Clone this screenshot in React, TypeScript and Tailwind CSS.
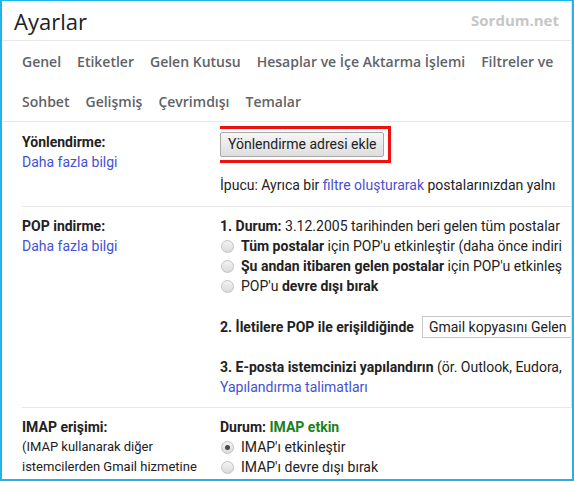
import React from "react";

const Radio = ({ checked = false }: { checked?: boolean }) => (
  <span className="ml-[1px] mr-[7px] inline-flex h-[13px] w-[13px] shrink-0 items-center justify-center rounded-full border border-[#c2c2c2] bg-linear-to-b from-[#f4f4f4] to-[#dadada]">
    {checked && <span className="h-[5px] w-[5px] rounded-full bg-[#4a4a4a]" />}
  </span>
);

const tabsTop = ["Genel", "Etiketler", "Gelen Kutusu", "Hesaplar ve İçe Aktarma İşlemi", "Filtreler ve"];
const tabsBottom = ["Sohbet", "Gelişmiş", "Çevrimdışı", "Temalar"];

const App = () => {
  return (
    <div className="h-[481px] w-[574px] overflow-hidden border-2 border-t border-[#1fb5ea] bg-white font-['Roboto',sans-serif] text-[14px] text-[#222]">
      <div className="border-r border-[#e3e3e3]">
        {/* header */}
        <div className="flex h-[40px] items-center justify-between border-b border-[#e8e8e8] pl-[12px] pr-[12px]">
          <span className="font-['Open_Sans',sans-serif] text-[22px] leading-none text-[#202124]">Ayarlar</span>
          <span className="font-['Open_Sans',sans-serif] text-[15px] font-bold text-[#c6c6c6]">Sordum.net</span>
        </div>

        {/* tabs */}
        <div className="border-b border-[#e8e8e8] pl-[20px] font-['Open_Sans',sans-serif] text-[14px] font-semibold text-[#5f6368]">
          <div className="flex h-[40px] items-center gap-4 whitespace-nowrap">
            {tabsTop.map((t) => (
              <span key={t}>{t}</span>
            ))}
          </div>
          <div className="flex h-[40px] items-center gap-4 whitespace-nowrap">
            {tabsBottom.map((t) => (
              <span key={t}>{t}</span>
            ))}
          </div>
        </div>

        {/* Yönlendirme */}
        <div className="ml-[20px] flex border-b border-[#e8e8e8] pb-[11px] leading-[20px]">
          <div className="w-[198px] shrink-0 pt-[10px]">
            <div className="font-bold">Yönlendirme:</div>
            <div className="text-[#4452d3]">Daha fazla bilgi</div>
          </div>
          <div className="min-w-0 flex-1 overflow-hidden whitespace-nowrap pt-[4px]">
            <div className="-ml-[9px] inline-block border-[3px] border-[#ee1111] py-[3px] pl-[6px] pr-[4px]">
              <button className="h-[25px] rounded-[2px] border border-[#a9a9a9] bg-linear-to-b from-[#f6f6f6] to-[#dedede] px-[7px] font-['Roboto',sans-serif] text-[14px] leading-[23px] text-[#222]">
                Yönlendirme adresi ekle
              </button>
            </div>
            <div className="mt-[12px]">
              İpucu: Ayrıca bir <span className="text-[#4a4fd0]">filtre oluşturarak</span> postalarınızdan yalnı
            </div>
          </div>
        </div>

        {/* POP */}
        <div className="ml-[20px] flex border-b border-[#e8e8e8] pb-[10px] leading-[20px]">
          <div className="w-[198px] shrink-0 pt-[9px]">
            <div className="font-bold">POP indirme:</div>
            <div className="text-[#4452d3]">Daha fazla bilgi</div>
          </div>
          <div className="min-w-0 flex-1 overflow-hidden whitespace-nowrap pt-[9px]">
            <div>
              <b>1. Durum:</b> 3.12.2005 tarihinden beri gelen tüm postalar
            </div>
            <div className="flex items-center">
              <Radio />
              <span>
                <b>Tüm postalar</b> için POP'u etkinleştir (daha önce indiri
              </span>
            </div>
            <div className="flex items-center">
              <Radio />
              <span>
                <b>Şu andan itibaren gelen postalar</b> için POP'u etkinleş
              </span>
            </div>
            <div className="flex items-center">
              <Radio />
              <span>
                POP'u <b>devre dışı bırak</b>
              </span>
            </div>
            <div className="mt-[20px] flex h-[22px] items-center">
              <b>2. İletilere POP ile erişildiğinde</b>
              <span className="ml-[8px] flex h-[22px] grow items-center border border-r-0 border-[#c8c8c8] pl-[6px]">
                Gmail kopyasını Gelen
              </span>
            </div>
            <div className="mt-[19px]">
              <b>3. E-posta istemcinizi yapılandırın</b> (ör. Outlook, Eudora,
            </div>
            <div className="text-[#4452d3]">Yapılandırma talimatları</div>
          </div>
        </div>
      </div>

      {/* IMAP */}
      <div className="ml-[20px] flex leading-[20px]">
        <div className="w-[198px] shrink-0 pt-[9px]">
          <div className="font-bold">IMAP erişimi:</div>
          <div className="text-[13px]">(IMAP kullanarak diğer</div>
          <div className="text-[13px]">istemcilerden Gmail hizmetine</div>
        </div>
        <div className="min-w-0 flex-1 overflow-hidden whitespace-nowrap pt-[9px]">
          <div className="font-bold">
            Durum: <span className="text-[#1b7f22]">IMAP etkin</span>
          </div>
          <div className="flex items-center">
            <Radio checked />
            <span>IMAP'ı etkinleştir</span>
          </div>
          <div className="flex items-center">
            <Radio />
            <span>IMAP'ı devre dışı bırak</span>
          </div>
        </div>
      </div>
    </div>
  );
};

export default App;
